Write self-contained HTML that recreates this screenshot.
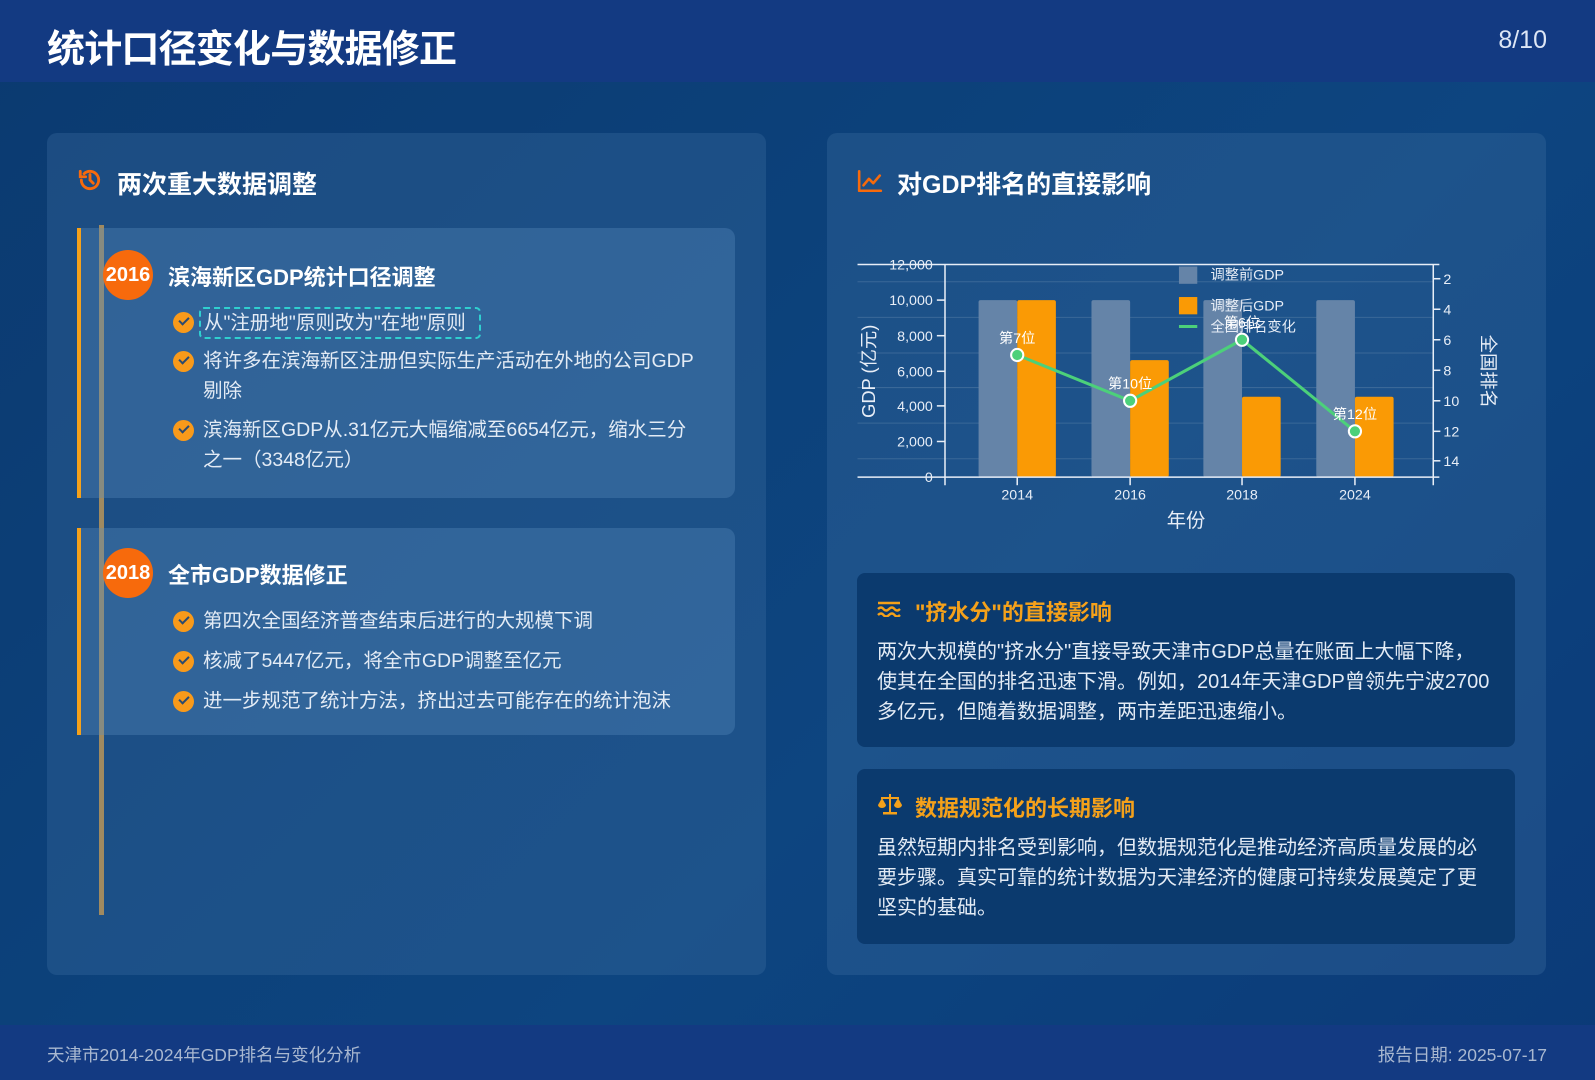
<!DOCTYPE html>
<html><head><meta charset="utf-8"><style>
*{margin:0;padding:0;box-sizing:border-box}
body{width:1595px;height:1080px;overflow:hidden;font-family:"Liberation Sans","Noto Sans CJK SC",sans-serif;background:linear-gradient(135deg,#0b3a70,#0d4580 60%,#0b3a78);color:#fff;position:relative}
.hdr{position:absolute;left:0;top:0;width:1595px;height:82px;background:#133a82}
.hdr h1{position:absolute;left:47px;top:18px;font-size:38px;font-weight:bold;letter-spacing:-0.8px}
.hdr .pg{position:absolute;right:48px;top:26px;font-size:25px;color:#dde6f5}
.card{position:absolute;top:133px;width:719px;height:842px;background:rgba(60,110,160,0.35);border-radius:10px}
.ct{position:absolute;top:32px;font-size:25px;font-weight:bold;left:70px}
.item{position:absolute;left:30px;width:658px;background:rgba(90,140,190,0.35);border-left:4px solid #f5a11a;border-radius:0 10px 10px 0}
.yr{position:absolute;left:22px;width:50px;height:50px;border-radius:50%;background:#f76a0c;font-weight:bold;font-size:20px;line-height:50px;text-align:center}
.it{position:absolute;left:87px;font-size:22px;font-weight:bold}
.li{position:absolute;left:122px;font-size:19.5px;color:#e3ebf5;line-height:30px;width:495px}
.ck{position:absolute;left:92px;width:21px;height:21px;border-radius:50%;background:#f99a1a}
.ck:after{content:"";position:absolute;left:6px;top:5px;width:8px;height:4px;border-left:2px solid #2a4a70;border-bottom:2px solid #2a4a70;transform:rotate(-45deg)}
.box{position:absolute;left:857px;width:658px;background:#0b3a6e;border-radius:8px}
.box h3{position:absolute;left:58px;top:22px;font-size:22px;color:#f5a11a}
.box p{position:absolute;left:20px;top:64px;font-size:20px;line-height:30px;color:#e3ebf5;width:612px}
.ftr{position:absolute;left:0;top:1025px;width:1595px;height:55px;background:#133a82;font-size:17.5px;color:#a9b8d0}
</style></head><body>
<div class="hdr"><h1>统计口径变化与数据修正</h1><div class="pg">8/10</div></div>

<div class="card" style="left:47px">
 <svg style="position:absolute;left:30px;top:34px" width="26" height="26" viewBox="0 0 24 24" fill="none" stroke="#f76a0c" stroke-width="2.6" stroke-linecap="round"><path d="M4 12a8 8 0 1 0 2.5-5.8"/><path d="M3 4v5h5"/><path d="M12 7v5l3 3"/></svg>
 <div class="ct">两次重大数据调整</div>
 <div style="position:absolute;left:52px;top:92px;width:5px;height:690px;background:#a08a60"></div>
 <div class="item" style="top:95px;height:270px">
  <div class="yr" style="top:22px">2016</div>
  <div class="it" style="top:32px">滨海新区GDP统计口径调整</div>
  <div class="ck" style="top:84px"></div>
  <div class="li" style="top:79px;left:118px;width:282px;border:2px dashed #2fd0d0;border-radius:5px;padding-left:3px;height:32px;line-height:28px">从"注册地"原则改为"在地"原则</div>
  <div class="ck" style="top:123px"></div>
  <div class="li" style="top:118px">将许多在滨海新区注册但实际生产活动在外地的公司GDP剔除</div>
  <div class="ck" style="top:192px"></div>
  <div class="li" style="top:187px">滨海新区GDP从.31亿元大幅缩减至6654亿元，缩水三分之一（3348亿元）</div>
 </div>
 <div class="item" style="top:395px;height:207px">
  <div class="yr" style="top:20px">2018</div>
  <div class="it" style="top:30px">全市GDP数据修正</div>
  <div class="ck" style="top:83px"></div>
  <div class="li" style="top:78px;width:560px">第四次全国经济普查结束后进行的大规模下调</div>
  <div class="ck" style="top:123px"></div>
  <div class="li" style="top:118px;width:560px">核减了5447亿元，将全市GDP调整至亿元</div>
  <div class="ck" style="top:163px"></div>
  <div class="li" style="top:158px;width:560px">进一步规范了统计方法，挤出过去可能存在的统计泡沫</div>
 </div>
</div>

<div class="card" style="left:827px">
 <svg style="position:absolute;left:30px;top:36px" width="26" height="24" viewBox="0 0 24 22" fill="none" stroke="#f76a0c" stroke-width="2.4" stroke-linecap="round" stroke-linejoin="round"><path d="M2 2v18h20"/><path d="M6 15l5-6 4 4 6-7"/></svg>
 <div class="ct">对GDP排名的直接影响</div>
</div>

<svg style="position:absolute;left:0;top:0" width="1595" height="1080" viewBox="0 0 1568 1061.7">
 <g stroke="#3a6898" stroke-width="1">
  <line x1="843" y1="277" x2="1409" y2="277"/><line x1="843" y1="312" x2="1409" y2="312"/><line x1="843" y1="347" x2="1409" y2="347"/><line x1="843" y1="381" x2="1409" y2="381"/><line x1="843" y1="416" x2="1409" y2="416"/><line x1="843" y1="451" x2="1409" y2="451"/>
 </g>
 <g fill="#6584a8">
  <rect x="962" y="295" width="38" height="174" rx="2"/><rect x="1073" y="295" width="38" height="174" rx="2"/><rect x="1183" y="295" width="38" height="174" rx="2"/><rect x="1294" y="295" width="38" height="174" rx="2"/>
 </g>
 <g fill="#fa9a05">
  <rect x="1000" y="295" width="38" height="174" rx="2"/><rect x="1111" y="354" width="38" height="115" rx="2"/><rect x="1221" y="390" width="38" height="79" rx="2"/><rect x="1332" y="390" width="38" height="79" rx="2"/>
 </g>
 <g stroke="#e8eef7" stroke-width="1.5" fill="none">
  <line x1="843" y1="260" x2="1415" y2="260"/><line x1="843" y1="469" x2="1415" y2="469"/>
  <line x1="929" y1="260" x2="929" y2="477"/><line x1="1409" y1="260" x2="1409" y2="477"/>
  <line x1="921" y1="295" x2="929" y2="295"/><line x1="921" y1="330" x2="929" y2="330"/><line x1="921" y1="365" x2="929" y2="365"/><line x1="921" y1="399" x2="929" y2="399"/><line x1="921" y1="434" x2="929" y2="434"/>
  <line x1="1409" y1="274" x2="1416" y2="274"/><line x1="1409" y1="304" x2="1416" y2="304"/><line x1="1409" y1="334" x2="1416" y2="334"/><line x1="1409" y1="364" x2="1416" y2="364"/><line x1="1409" y1="394" x2="1416" y2="394"/><line x1="1409" y1="424" x2="1416" y2="424"/><line x1="1409" y1="453" x2="1416" y2="453"/>
  <line x1="1000" y1="469" x2="1000" y2="477"/><line x1="1111" y1="469" x2="1111" y2="477"/><line x1="1221" y1="469" x2="1221" y2="477"/><line x1="1332" y1="469" x2="1332" y2="477"/>
 </g>
 <g fill="#e8eef7" font-size="14" text-anchor="end">
  <text x="917" y="265">12,000</text><text x="917" y="300">10,000</text><text x="917" y="335">8,000</text><text x="917" y="370">6,000</text><text x="917" y="404">4,000</text><text x="917" y="439">2,000</text><text x="917" y="474">0</text>
 </g>
 <g fill="#e8eef7" font-size="14">
  <text x="1419" y="279">2</text><text x="1419" y="309">4</text><text x="1419" y="339">6</text><text x="1419" y="369">8</text><text x="1419" y="399">10</text><text x="1419" y="429">12</text><text x="1419" y="458">14</text>
 </g>
 <g fill="#e8eef7" font-size="14" text-anchor="middle">
  <text x="1000" y="491">2014</text><text x="1111" y="491">2016</text><text x="1221" y="491">2018</text><text x="1332" y="491">2024</text>
 </g>
 <text x="1166" y="518" fill="#e8eef7" font-size="19" text-anchor="middle">年份</text>
 <text transform="translate(860,365) rotate(-90)" fill="#e8eef7" font-size="18" text-anchor="middle">GDP (亿元)</text>
 <text transform="translate(1457,365) rotate(90)" fill="#e8eef7" font-size="18" text-anchor="middle">全国排名</text>
 <rect x="1159" y="262" width="18" height="17" fill="#6584a8"/><text x="1190" y="275" fill="#e8eef7" font-size="14">调整前GDP</text>
 <rect x="1159" y="292" width="18" height="17" fill="#fa9a05"/><text x="1190" y="305" fill="#e8eef7" font-size="14">调整后GDP</text>
 <line x1="1159" y1="321" x2="1177" y2="321" stroke="#4cd07a" stroke-width="3"/><text x="1190" y="326" fill="#e8eef7" font-size="14">全国排名变化</text>
 <polyline points="1000,349 1111,394 1221,334 1332,424" fill="none" stroke="#4cd07a" stroke-width="3"/>
 <g fill="#4cd07a" stroke="#fff" stroke-width="2">
  <circle cx="1000" cy="349" r="6"/><circle cx="1111" cy="394" r="6"/><circle cx="1221" cy="334" r="6"/><circle cx="1332" cy="424" r="6"/>
 </g>
 <g fill="#fff" font-size="14" text-anchor="middle">
  <text x="1000" y="337">第7位</text><text x="1111" y="382">第10位</text><text x="1221" y="322">第6位</text><text x="1332" y="412">第12位</text>
 </g>
</svg>

<div class="box" style="top:573px;height:174px">
 <svg style="position:absolute;left:20px;top:28px" width="24" height="16" viewBox="0 0 24 16" fill="none" stroke="#f5a11a" stroke-width="2.4"><path d="M1 2h22M1 8q3-3 5.5 0t5.5 0 5.5 0 5.5 0M1 14q3-3 5.5 0t5.5 0 5.5 0 5.5 0"/></svg>
 <h3>"挤水分"的直接影响</h3>
 <p style="width:636px">两次大规模的"挤水分"直接导致天津市GDP总量在账面上大幅下降，<br>使其在全国的排名迅速下滑。例如，2014年天津GDP曾领先宁波2700<br>多亿元，但随着数据调整，两市差距迅速缩小。</p>
</div>
<div class="box" style="top:769px;height:175px">
 <svg style="position:absolute;left:20px;top:24px" width="26" height="22" viewBox="0 0 26 22" fill="#f5a11a"><rect x="12" y="1" width="2" height="18"/><rect x="4" y="4" width="18" height="2"/><rect x="6" y="19" width="14" height="2.5"/><path d="M1 12l4-7 4 7a4 3 0 0 1-8 0z"/><path d="M17 12l4-7 4 7a4 3 0 0 1-8 0z"/></svg>
 <h3>数据规范化的长期影响</h3>
 <p>虽然短期内排名受到影响，但数据规范化是推动经济高质量发展的必要步骤。真实可靠的统计数据为天津经济的健康可持续发展奠定了更坚实的基础。</p>
</div>

<div class="ftr"><span style="position:absolute;left:47px;top:17px">天津市2014-2024年GDP排名与变化分析</span><span style="position:absolute;right:48px;top:17px">报告日期: 2025-07-17</span></div>
</body></html>
